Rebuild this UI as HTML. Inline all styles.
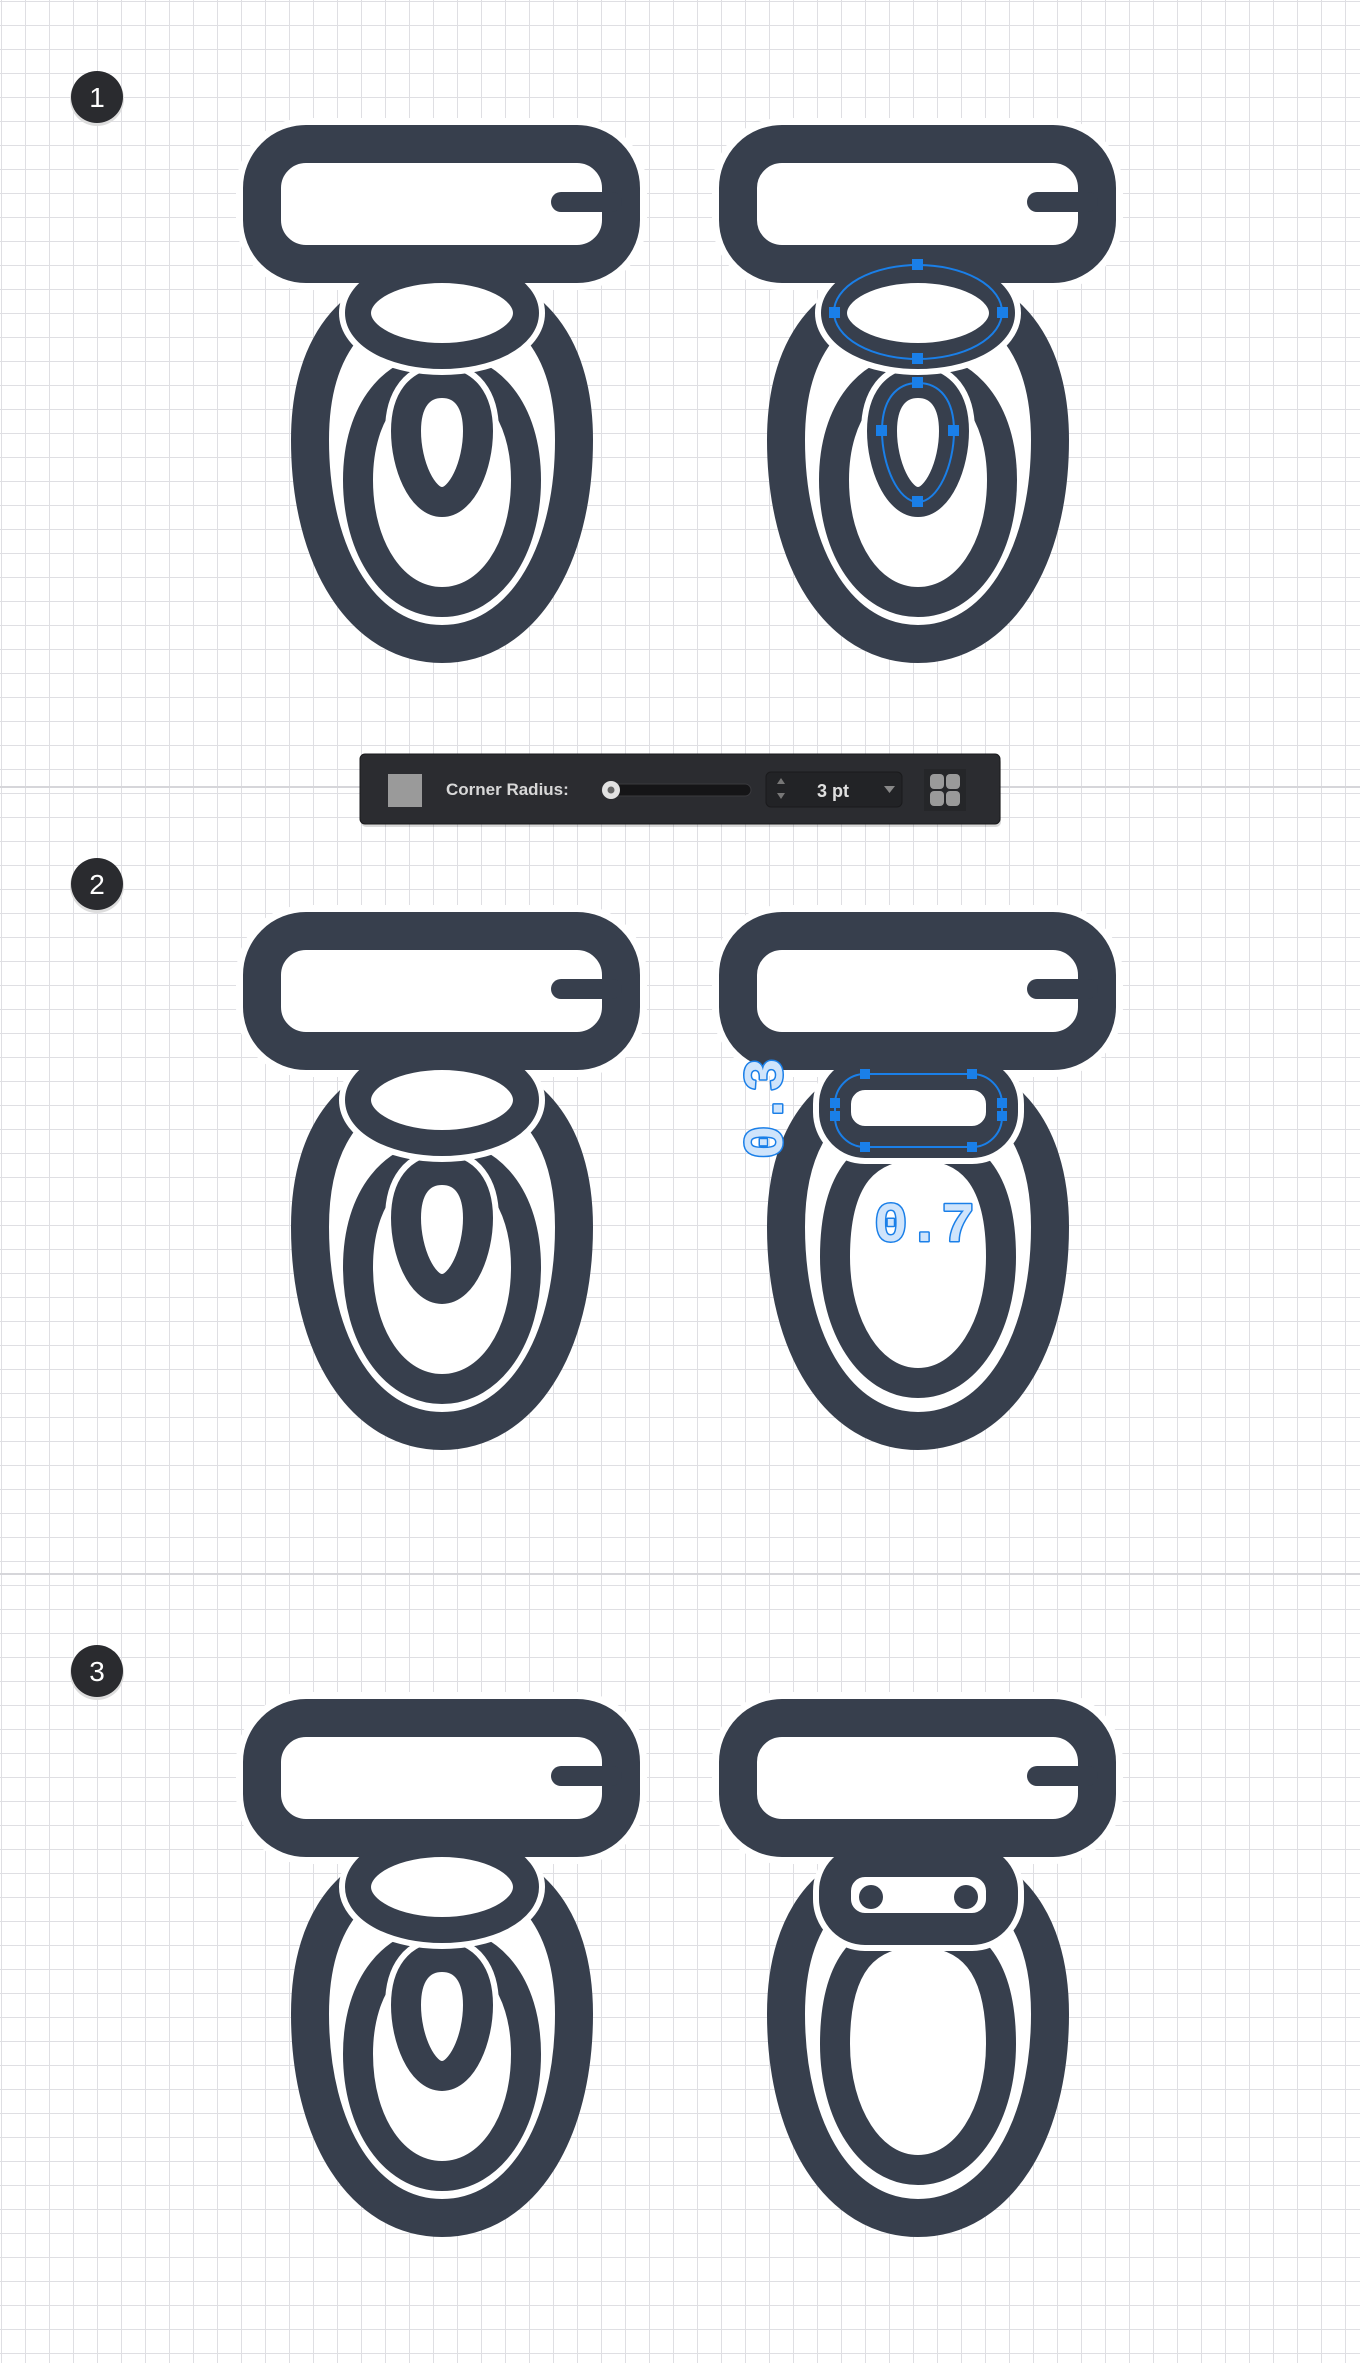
<!DOCTYPE html>
<html><head><meta charset="utf-8"><style>
html,body{margin:0;padding:0;background:#fff;}
svg{display:block;}
</style></head><body>
<svg width="1360" height="2363" viewBox="0 0 1360 2363" xmlns="http://www.w3.org/2000/svg">
<defs>
<pattern id="grid" width="24" height="24" patternUnits="userSpaceOnUse" x="1" y="1">
<path d="M0 0H24M0 0V24" stroke="#dfdfe3" stroke-width="2" fill="none"/>
</pattern>
<g id="tankHalo">
<rect x="262" y="144" width="359" height="120" rx="44" fill="#fff" stroke="#fff" stroke-width="52"/>
</g>
<g id="tank">
<rect x="262" y="144" width="359" height="120" rx="44" fill="#fff" stroke="#373f4d" stroke-width="38"/>
<path d="M561 202H612" stroke="#373f4d" stroke-width="20" stroke-linecap="round"/>
</g>
<g id="bowl">
<path d="M310,440 C310,340 360,285 442,285 C524,285 574,340 574,440 C574,560 520,644 442,644 C364,644 310,560 310,440Z" fill="#fff" stroke="#373f4d" stroke-width="38"/>
</g>
<g id="tA">
<use href="#bowl"/>
<use href="#tankHalo"/>
<path d="M358,480 C358,410 395,368 442,368 C489,368 526,410 526,480 C526,550 490,602 442,602 C394,602 358,550 358,480Z" fill="#fff" stroke="#373f4d" stroke-width="30"/>
<path d="M406,431 C406,400 420,383 442,383 C464,383 478,400 478,431 C478,465 462,502 442,502 C422,502 406,465 406,431Z" fill="#fff" stroke="#fff" stroke-width="42"/>
<path d="M406,431 C406,400 420,383 442,383 C464,383 478,400 478,431 C478,465 462,502 442,502 C422,502 406,465 406,431Z" fill="#fff" stroke="#373f4d" stroke-width="30"/>
<ellipse cx="442" cy="313" rx="84" ry="43" fill="#fff" stroke="#fff" stroke-width="38"/>
<ellipse cx="442" cy="313" rx="84" ry="43" fill="#fff" stroke="#373f4d" stroke-width="26"/>
<use href="#tank"/>
</g>
<g id="tB">
<use href="#bowl"/>
<use href="#tankHalo"/>
<path d="M359,470 C359,390 390,358 442,358 C494,358 525,390 525,470 C525,540 490,596 442,596 C394,596 359,540 359,470Z" fill="#fff" stroke="#373f4d" stroke-width="30"/>
<rect x="359" y="287" width="167" height="68" rx="30" fill="#fff" stroke="#fff" stroke-width="44"/>
<rect x="359" y="287" width="167" height="68" rx="30" fill="#fff" stroke="#373f4d" stroke-width="32"/>
<use href="#tank"/>
</g>
</defs>
<rect width="1360" height="2363" fill="#fff"/>
<rect width="1360" height="2363" fill="url(#grid)"/>
<path d="M0 787H1360M0 1574H1360" stroke="#d6d6da" stroke-width="2"/>

<g font-family="Liberation Sans, sans-serif" font-size="28" fill="#fff" text-anchor="middle">
<circle cx="97" cy="99" r="27" fill="#ddd"/><circle cx="97" cy="97" r="26" fill="#2a2b2f"/><text x="97" y="107">1</text>
<circle cx="97" cy="886" r="27" fill="#ddd"/><circle cx="97" cy="884" r="26" fill="#2a2b2f"/><text x="97" y="894">2</text>
<circle cx="97" cy="1673" r="27" fill="#ddd"/><circle cx="97" cy="1671" r="26" fill="#2a2b2f"/><text x="97" y="1681">3</text>
</g>

<use href="#tA"/>
<use href="#tA" x="476"/>
<g fill="none" stroke="#1a7fe8" stroke-width="2">
<ellipse cx="918" cy="312" rx="84" ry="47"/>
<path d="M882,431 C882,400 896,383 918,383 C940,383 954,400 954,431 C954,465 938,502 918,502 C898,502 882,465 882,431Z"/>
</g>
<g fill="#1a7fe8">
<rect x="912" y="259" width="11" height="11"/><rect x="912" y="353" width="11" height="11"/>
<rect x="829" y="307" width="11" height="11"/><rect x="997" y="307" width="11" height="11"/>
<rect x="912" y="377" width="11" height="11"/><rect x="912" y="496" width="11" height="11"/>
<rect x="876" y="425" width="11" height="11"/><rect x="948" y="425" width="11" height="11"/>
</g>

<!-- toolbar -->
<rect x="361" y="757" width="640" height="70" rx="5" fill="#000" opacity="0.15"/>
<rect x="360" y="754" width="640" height="70" rx="5" fill="#2b2c30" stroke="#1a1a1c" stroke-width="1"/>
<rect x="388" y="774" width="34" height="33" fill="#9a9a9a"/>
<text x="446" y="795" font-family="Liberation Sans, sans-serif" font-weight="bold" font-size="17" fill="#d8d8d8">Corner Radius:</text>
<rect x="602" y="784" width="149" height="12" rx="6" fill="#151517" stroke="#3a3a3e"/>
<circle cx="611" cy="790" r="9" fill="#e2e2e2"/><circle cx="611" cy="790" r="3.5" fill="#666"/>
<rect x="766" y="772" width="136" height="35" rx="5" fill="#222326" stroke="#1a1a1c"/>
<path d="M777 784l4-6 4 6zM777 793l4 6 4-6z" fill="#777"/>
<text x="817" y="797" font-family="Liberation Sans, sans-serif" font-weight="bold" font-size="18" fill="#e0e0e0">3 pt</text>
<path d="M884 786h11l-5.5 7z" fill="#888"/>
<rect x="924" y="769" width="42" height="42" fill="#252629"/>
<rect x="930" y="774" width="14" height="15" rx="4" fill="#9a9a9a"/><rect x="946" y="774" width="14" height="15" rx="4" fill="#9a9a9a"/>
<rect x="930" y="791" width="14" height="15" rx="4" fill="#9a9a9a"/><rect x="946" y="791" width="14" height="15" rx="4" fill="#9a9a9a"/>

<g transform="translate(0,787)">
<use href="#tA"/>
<use href="#tB" x="476"/>
<g fill="none" stroke="#1a7fe8" stroke-width="2">
<rect x="835" y="287" width="167" height="73" rx="30"/>
</g>
<g fill="#1a7fe8">
<rect x="860" y="282" width="10" height="10"/><rect x="967" y="282" width="10" height="10"/>
<rect x="860" y="355" width="10" height="10"/><rect x="967" y="355" width="10" height="10"/>
<rect x="830" y="311" width="10" height="10"/><rect x="830" y="324" width="10" height="10"/>
<rect x="997" y="311" width="10" height="10"/><rect x="997" y="324" width="10" height="10"/>
</g>
<g font-family="Liberation Mono, monospace" font-weight="bold" font-size="56" fill="#cfe4fb" stroke="#1a7fe8" stroke-width="3" stroke-linejoin="round" paint-order="stroke">
<text x="874" y="454">0.7</text>
<text transform="translate(782,372) rotate(-90)">0.3</text>
</g>
</g>

<g transform="translate(0,1574)">
<use href="#tA"/>
<use href="#tB" x="476"/>
<circle cx="871" cy="323" r="12" fill="#373f4d"/>
<circle cx="966" cy="323" r="12" fill="#373f4d"/>
</g>
</svg>
</body></html>
